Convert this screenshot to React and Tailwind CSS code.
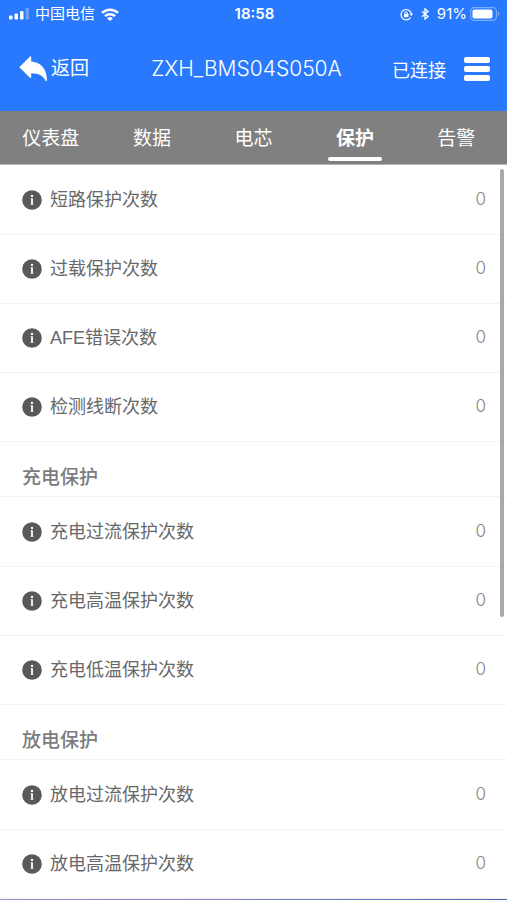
import React, { useState } from 'react';

const tabs = [
  { id: 'dashboard', name: '仪表盘' },
  { id: 'data', name: '数据' },
  { id: 'cells', name: '电芯' },
  { id: 'protection', name: '保护' },
  { id: 'alarm', name: '告警' },
];

const sections = [
  {
    title: null,
    items: [
      { name: '短路保护次数', value: 0 },
      { name: '过载保护次数', value: 0 },
      { name: 'AFE错误次数', value: 0 },
      { name: '检测线断次数', value: 0 },
    ],
  },
  {
    title: '充电保护',
    items: [
      { name: '充电过流保护次数', value: 0 },
      { name: '充电高温保护次数', value: 0 },
      { name: '充电低温保护次数', value: 0 },
    ],
  },
  {
    title: '放电保护',
    items: [
      { name: '放电过流保护次数', value: 0 },
      { name: '放电高温保护次数', value: 0 },
    ],
  },
];

const SignalIcon = () => (
  <svg className="w-5 h-3" viewBox="0 0 20 12" fill="white">
    <rect x="0" y="7.5" width="3.5" height="4" rx="1" />
    <rect x="5.5" y="5.5" width="3.5" height="6" rx="1" />
    <rect x="11" y="3" width="3.5" height="8.5" rx="1" />
    <rect x="16.5" y="0" width="3.5" height="11.5" rx="1" opacity="0.3" />
  </svg>
);

const WifiIcon = () => (
  <svg className="w-[18px] h-[13px]" viewBox="0 0 18 13" fill="none" stroke="white" strokeWidth="2.5">
    <path d="M1 4.9a11.6 11.6 0 0 1 16 0" />
    <path d="M4 8.2a7.4 7.4 0 0 1 10 0" />
    <path d="M9 13 6.2 10.4a4 4 0 0 1 5.6 0z" fill="white" stroke="none" />
  </svg>
);

const RotationLockIcon = () => (
  <svg className="w-[13px] h-[13px]" viewBox="0 0 13 13" fill="none" stroke="white">
    <path d="M10.6 9.6A5.2 5.2 0 1 1 11.4 6" strokeWidth="1.2" />
    <path d="M9.6 5.6h3.4l-1.7 2.6z" fill="white" stroke="none" />
    <rect x="4" y="5.8" width="4.4" height="3.4" rx="0.5" fill="white" stroke="none" />
    <path d="M5 6V4.9a1.2 1.2 0 0 1 2.4 0V6" strokeWidth="0.9" />
  </svg>
);

const BluetoothIcon = () => (
  <svg className="w-2 h-3" viewBox="0 0 8 12" fill="none" stroke="white" strokeWidth="1.3">
    <path d="M1 3.3 7 8.6 4 11.2V0.8L7 3.4 1 8.7" />
  </svg>
);

const BatteryIcon = () => (
  <svg className="w-[30px] h-[14px]" viewBox="0 0 30 14">
    <rect x="0.6" y="0.6" width="25.8" height="12.8" rx="3.6" fill="none" stroke="white" strokeOpacity="0.4" strokeWidth="1.1" />
    <rect x="2.5" y="2.5" width="20" height="9" rx="2" fill="white" />
    <path d="M27.8 4.8c1.6.6 1.6 3.8 0 4.4z" fill="white" opacity="0.45" />
  </svg>
);

const BackIcon = () => (
  <svg className="w-7 h-[26px]" viewBox="0 0 28 26" fill="white">
    <path d="M0.3 11.2 11 0.6c.6-.6 1.2-.3 1.2.5v4.4C21.5 6 28 12.5 27.9 24.2c0 1.2-.9 1.3-1.4.3C24 19.5 19.6 17.4 12.2 17.3v4c0 .8-.6 1.1-1.2.5z" />
  </svg>
);

const MenuIcon = () => (
  <svg className="w-[26px] h-6" viewBox="0 0 26 24" fill="white">
    <rect x="0" y="0" width="26" height="6" rx="2" />
    <rect x="0" y="9" width="26" height="6" rx="2" />
    <rect x="0" y="18" width="26" height="6" rx="2" />
  </svg>
);

const InfoIcon = () => (
  <svg className="w-5 h-5 shrink-0" viewBox="0 0 20 20">
    <circle cx="10" cy="10" r="9.8" fill="#58595b" />
    <circle cx="10" cy="5.9" r="1.2" fill="white" />
    <path d="M8.6 8.2h2.3v5.9h.5v.7H8.6v-.7h.5V8.9h-.5z" fill="white" />
  </svg>
);

const StatusBar = () => (
  <div className="grid grid-cols-[1fr_auto_1fr] items-center h-7 pl-[9px] pr-[7px] text-[15px] text-white">
    <div className="flex items-center gap-[6px]">
      <SignalIcon />
      <span>中国电信</span>
      <WifiIcon />
    </div>
    <span className="font-['Inter'] font-semibold">18:58</span>
    <div className="flex items-center justify-end gap-2">
      <RotationLockIcon />
      <BluetoothIcon />
      <div className="flex items-center gap-[3px]">
        <span className="font-['Inter']">91%</span>
        <BatteryIcon />
      </div>
    </div>
  </div>
);

const ListRow = ({ name, value }) => (
  <li className="flex items-center justify-between h-[69px] pl-[22px] pr-[21px] border-b border-[#f3f3f3]">
    <div className="flex items-center gap-2">
      <InfoIcon />
      <span className="text-lg text-[#67686a]">{name}</span>
    </div>
    <span className="font-['Inter'] text-[17px] font-light text-[#858585]">{value}</span>
  </li>
);

export default function App() {
  const [activeTab, setActiveTab] = useState('protection');

  return (
    <div className="min-h-screen flex flex-col bg-white font-['Liberation_Sans','Noto_Sans_CJK_SC',sans-serif]">
      {/* Header */}
      <header className="h-[111px] bg-[#2979ff] text-white">
        <StatusBar />
        <div className="grid grid-cols-[1fr_auto_1fr] items-center h-[82px] pl-[19px] pr-[17px]">
          <button className="flex items-center gap-1 text-[19px]">
            <BackIcon />
            返回
          </button>
          <h1 className="pr-4 font-['Inter'] text-[21px] font-light">ZXH_BMS04S050A</h1>
          <div className="flex items-end justify-end gap-[18px]">
            <span className="text-lg leading-5">已连接</span>
            <button aria-label="菜单">
              <MenuIcon />
            </button>
          </div>
        </div>
      </header>

      {/* Tabs */}
      <nav className="grid grid-cols-5 h-[54px] bg-[#808080] border-b border-[#b5b5b5]">
        {tabs.map((tab) => (
          <button
            key={tab.id}
            onClick={() => setActiveTab(tab.id)}
            className={`flex flex-col items-center justify-end gap-1 pb-[3px] text-[19px] leading-7 text-white ${
              activeTab === tab.id ? 'font-bold' : 'font-normal'
            }`}
          >
            {tab.name}
            <span className={`w-[54px] h-1 rounded-full ${activeTab === tab.id ? 'bg-white' : ''}`}></span>
          </button>
        ))}
      </nav>

      {/* Counters */}
      <main className="relative flex-1">
        {sections.map((section, index) => (
          <section key={index}>
            {section.title && (
              <h2 className="flex items-end h-[55px] px-[22px] pb-1 border-b border-[#f3f3f3] text-[19px] leading-7 font-medium text-[#7b7c7e]">
                {section.title}
              </h2>
            )}
            <ul className="pt-px">
              {section.items.map((item) => (
                <ListRow key={item.name} name={item.name} value={item.value} />
              ))}
            </ul>
          </section>
        ))}

        {/* Scroll indicator */}
        <div className="absolute top-1 right-[3px] w-1 h-[448px] rounded-full bg-[#a9a9a9]"></div>
      </main>

      <div className="h-px bg-linear-to-r from-[#a294d6] via-[#7c83cc] to-[#5263b0]"></div>
    </div>
  );
}
